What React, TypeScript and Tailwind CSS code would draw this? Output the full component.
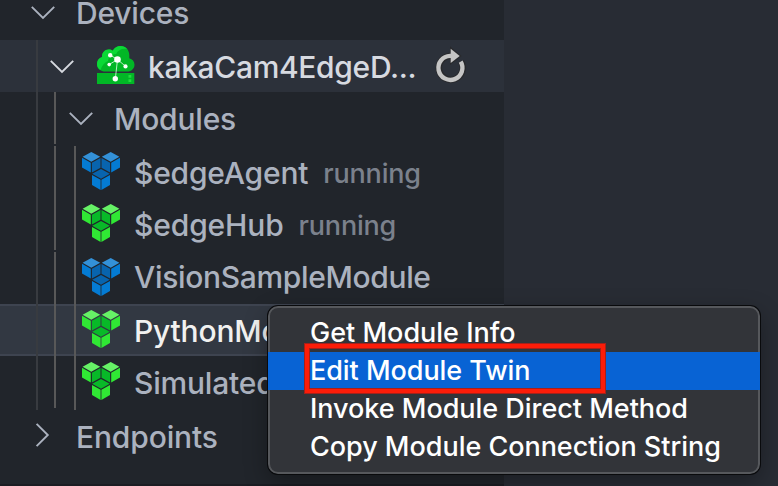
import type { ReactNode } from 'react';
import clsx from 'clsx';

function Chevron({ open, className }: { open?: boolean; className?: string }) {
  return (
    <svg className={clsx('shrink-0', className)} width="26" height="26" viewBox="0 0 26 26" fill="none" stroke="currentColor" strokeWidth="1.9">
      {open ? <path d="M1.8 7.8 13 19 24.2 7.8" /> : <path d="M7.6 1.8 18.8 13 7.6 24.2" />}
    </svg>
  );
}

const palettes = {
  blue: { top: '#3391d8', out: '#047bd3', inn: '#0864ae' },
  green: { top: '#66f266', out: '#30e834', inn: '#08b928' },
};

function Cubes({ color, className }: { color: 'blue' | 'green'; className?: string }) {
  const c = palettes[color];
  return (
    <svg className={clsx('shrink-0', className)} width="38" height="38" viewBox="0 0 38 38">
      <path fill={c.top} d="M9.3 0 18.2 4.8 9.3 9.7.6 4.8ZM28.7 0 37.4 4.8 28.7 9.7 19.8 4.8Z" />
      <path fill={c.out} d="M0 5.8 8.8 10.8V20.5L0 15.5ZM38 5.8 29.2 10.8V20.5L38 15.5Z" />
      <path fill={c.inn} d="M9.9 10.8 18.5 6V15.7L9.9 20.5ZM28.1 10.8 19.5 6V15.7L28.1 20.5ZM19 16.9 27.8 21.8 19 26.7 10.2 21.8Z" />
      <path fill={c.out} d="M10 23 18.6 27.8V38L10 33.1ZM28 23 19.4 27.8V38L28 33.1Z" />
    </svg>
  );
}

function EdgeDevice() {
  return (
    <svg className="-mt-[2px] ml-[22px] shrink-0" width="38" height="38" viewBox="0 0 38 38">
      <path fill="#02b726" d="M8.5 25.5C3.5 25.5 0 22.3 0 18.2c0-3.7 2.2-6.5 5-7.3C4.8 6.7 8 3.2 12 3.5c1.5 0 2.7.5 3.7 1.3C17.3 1.8 20.2 0 23.6 0c5 0 8.6 3.8 8.7 9v3.2c3.1.8 5.2 3.3 5.2 6.5 0 3.900-3.100 6.800-7.200 6.800Z" />
      <path fill="#0bd936" d="M3.5 24C1.3 22.8 0 20.7 0 18.2c0-3.7 2.2-6.5 5-7.3C4.8 6.7 8 3.2 12 3.5c1.5 0 2.7.5 3.7 1.3C17.3 1.8 20.2 0 23.6 0c2.7 0 5 1.1 6.6 2.9-5.8-.7-9.5 1.5-11 5.1-5 .2-7.5 2.5-8.2 7C7.2 16.5 5 20 3.5 24Z" />
      <rect y="27" width="37.3" height="11" fill="#02b726" />
      <path fill="#22dc3e" d="M31.5 29h2.8v2.8h-2.8zM31.5 33.3h2.8v2.8h-2.8z" />
      <path d="M13 9 20.5 13.5 12.2 18.5M20.5 13.5 28.5 20.3M20.5 13.5 18.3 33" fill="none" stroke="#e4ffe8" strokeWidth=".8" />
      <g fill="#fff">
        <circle cx="20.5" cy="13.5" r="3.3" />
        <circle cx="13.2" cy="9.2" r="2.2" />
        <circle cx="12.2" cy="18.6" r="1.8" />
        <circle cx="28.5" cy="20.4" r="2.1" />
        <circle cx="18.3" cy="32.8" r="2.7" />
      </g>
    </svg>
  );
}

function Refresh() {
  return (
    <svg className="absolute left-[433px] top-[6px]" width="34" height="40" viewBox="0.5 0 34 40">
      <path d="M17.6 9.9A12 12 0 1 0 28.6 15.7" fill="none" stroke="#292a2d" strokeWidth="6.5" />
      <path d="M18.5 2.5 27.5 10 18.5 17Z" fill="#292a2d" stroke="#292a2d" strokeWidth="2" />
      <path d="M19 9.9H17.6A12 12 0 1 0 28.2 15.7" fill="none" stroke="#c5c5c5" strokeWidth="4.4" />
      <path d="M18.2 2.8 27.2 9.900 18.200 17Z" fill="#c5c5c5" />
    </svg>
  );
}

function Row({ className, children }: { className?: string; children: ReactNode }) {
  return <div className={clsx('flex h-[52px] shrink-0 items-center whitespace-nowrap', className)}>{children}</div>;
}

function Label({ className, children }: { className?: string; children: ReactNode }) {
  return <span className={clsx('relative top-[1px]', className)}>{children}</span>;
}

function State({ children }: { children: ReactNode }) {
  return <span className="relative top-[2px] ml-[15px] text-[27px] tracking-[-0.2px] text-[#7b818c]">{children}</span>;
}

function Guides() {
  return (
    <div className="pointer-events-none absolute inset-0">
      <div className="absolute left-[36px] top-[40px] h-[370px] w-[2px] bg-[#383b40]" />
      <div className="absolute left-[54px] top-[92px] h-[52px] w-[2px] bg-[#585858]" />
      <div className="absolute left-[54px] top-[146px] h-[104px] w-[2px] bg-[#585858]" />
      <div className="absolute left-[54px] top-[252px] h-[156px] w-[2px] bg-[#585858]" />
      <div className="absolute left-[74px] top-[146px] h-[264px] w-[2px] bg-[#585858]" />
    </div>
  );
}

export default function App() {
  return (
    <div className="relative flex h-[486px] w-[778px] overflow-hidden bg-[#282c34] font-['Inter',sans-serif]">
      <aside className="relative flex w-[504px] flex-col overflow-hidden bg-[#21252b] text-[30px] font-[450] leading-[52px] tracking-[-0.2px] text-[#abb2bf]">
        <Row className="-mt-[14px] pl-[30px]">
          <Chevron open />
          <Label className="ml-[20px]">Devices</Label>
        </Row>
        <Row className="relative mt-[2px] bg-[#2c313a] pl-[49px] text-[#d7dae0]">
          <Chevron open />
          <EdgeDevice />
          <Label className="ml-[13px] tracking-[-0.33px]">kakaCam4EdgeD...</Label>
          <Refresh />
        </Row>
        <Row className="pl-[68px]">
          <Chevron open />
          <Label className="ml-[20px]">Modules</Label>
        </Row>
        <Row className="mt-[2px] pl-[82px]">
          <Cubes color="blue" className="-mt-[2px]" />
          <Label className="ml-[14px]">$edgeAgent</Label>
          <State>running</State>
        </Row>
        <Row className="pl-[82px]">
          <Cubes color="green" className="-mt-[2px]" />
          <Label className="ml-[14px] tracking-[-0.14px]">$edgeHub</Label>
          <State>running</State>
        </Row>
        <Row className="pl-[82px]">
          <Cubes color="blue" className="mt-[2px]" />
          <Label className="ml-[14px] tracking-[-0.34px]">VisionSampleModule</Label>
        </Row>
        <Row className="mt-[2px] bg-[#323842] pl-[82px] text-[#f1f1f0] shadow-[inset_0_2px_#3e4450,inset_0_-2px_#3e4450]">
          <Cubes color="green" className="-mt-[2px]" />
          <Label className="ml-[14px]">PythonMo</Label>
        </Row>
        <Row className="pl-[82px]">
          <Cubes color="green" className="-mt-[2px]" />
          <Label className="ml-[14px]">Simulated</Label>
        </Row>
        <Row className="mt-[2px] pl-[29px]">
          <Chevron className="-mt-[2px]" />
          <Label className="ml-[21px] tracking-[-0.14px]">Endpoints</Label>
        </Row>
        <div className="absolute inset-x-0 bottom-0 h-[2px] bg-[#1b1d23]" />
        <Guides />
      </aside>

      <div className="absolute left-[268px] top-[306px] flex h-[168px] w-[492px] flex-col overflow-hidden rounded-[10px] bg-[#323439] py-[8px] text-[27px] font-medium leading-[38px] text-white shadow-[0_0_0_1px_#090a0c,0_8px_24px_#00000055]">
        <div className="pointer-events-none absolute inset-0 rounded-[10px] border-2 border-[#56585c]" />
        <div className="h-[38px] whitespace-nowrap pl-[42px]">Get Module Info</div>
        <div className="relative h-[38px] whitespace-nowrap bg-[#0863d4] pl-[42px] tracking-[-0.05px]">Edit Module Twin</div>
        <div className="h-[38px] whitespace-nowrap pl-[42px] tracking-[-0.03px]">Invoke Module Direct Method</div>
        <div className="h-[38px] whitespace-nowrap pl-[42px] tracking-[-0.03px]">Copy Module Connection String</div>
      </div>
      <div className="absolute left-[305px] top-[344px] h-[49px] w-[300px] border-[4px] border-[#fc1d09] shadow-[0_0_0_1px_#a6201a,inset_0_0_0_1px_#a6201a]" />
    </div>
  );
}
